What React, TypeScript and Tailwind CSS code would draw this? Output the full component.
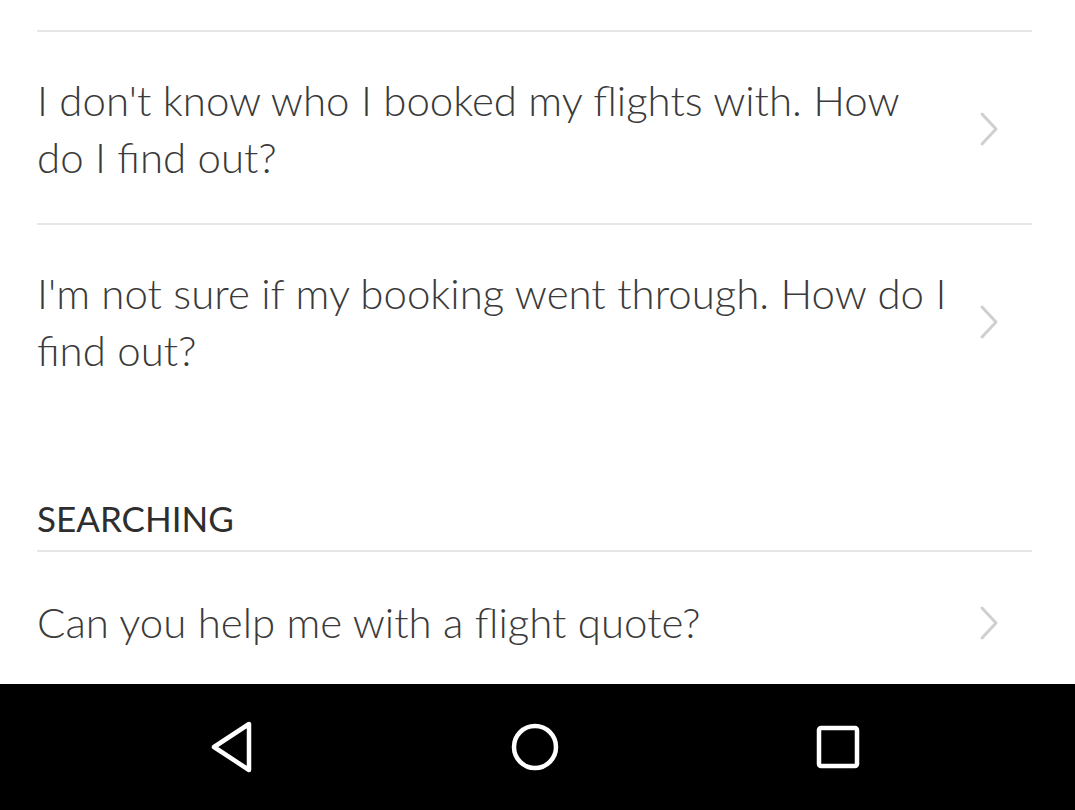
const faqs = [
  { id: 1, text: "I don't know who I booked my flights with. How do I find out?", divider: true },
  { id: 2, text: "I'm not sure if my booking went through. How do I find out?", divider: false },
];

function Chevron() {
  return (
    <svg width="22" height="36" viewBox="0 0 22 36" fill="none" className="shrink-0">
      <path d="M4 3 L18 18 L4 33" stroke="#cfcfcf" strokeWidth="3" strokeLinecap="round" strokeLinejoin="round" />
    </svg>
  );
}

function Row({ text, className = "" }: { text: string; className?: string }) {
  return (
    <div className={`flex items-center justify-between ${className}`}>
      <p className="w-[918px] text-[42px] leading-[57px] font-light text-[#3a3a3a]">{text}</p>
      <div className="pr-[32px]">
        <Chevron />
      </div>
    </div>
  );
}

export default function App() {
  return (
    <div className="w-[1075px] h-[810px] bg-white flex flex-col overflow-hidden" style={{ fontFamily: "Lato, 'Open Sans', sans-serif" }}>
      <div className="flex-1 pl-[37px] pr-[43px] pt-[30px]">
        <div className="border-t-2 border-[#e6e6e6]" />
        {faqs.map((f) => (
          <div key={f.id} className={f.divider ? "border-b-2 border-[#e6e6e6]" : ""}>
            <Row text={f.text} className="pt-[40px] pb-[37px]" />
          </div>
        ))}

        <div className="pt-[82px] pb-[12px]">
          <h2 className="text-[35px] leading-[40px] font-normal text-[#2e2e2e]">SEARCHING</h2>
        </div>
        <div className="border-t-2 border-[#e6e6e6]" />
        <Row text="Can you help me with a flight quote?" className="pt-[42px]" />
      </div>

      {/* android nav bar */}
      <nav className="h-[126px] bg-black flex items-center justify-center gap-[243px] pr-[5px] shrink-0">
        <div className="w-[60px] flex justify-center">
          <svg width="46" height="54" viewBox="0 0 46 54" fill="none">
            <path d="M40 4 L40 50 L5 27 Z" stroke="white" strokeWidth="4.5" strokeLinejoin="round" />
          </svg>
        </div>
        <div className="w-[60px] flex justify-center">
          <svg width="50" height="50" viewBox="0 0 50 50" fill="none">
            <circle cx="25" cy="25" r="21" stroke="white" strokeWidth="4.5" />
          </svg>
        </div>
        <div className="w-[60px] flex justify-center">
          <svg width="46" height="46" viewBox="0 0 46 46" fill="none">
            <rect x="4" y="4" width="38" height="38" rx="2" stroke="white" strokeWidth="4.5" />
          </svg>
        </div>
      </nav>
    </div>
  );
}
